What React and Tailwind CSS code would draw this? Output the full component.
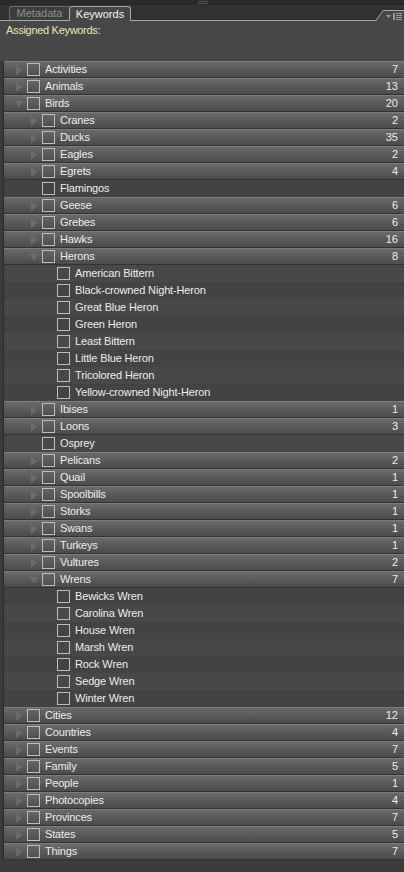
import React from "react";

const rows = [
  { l: 0, t: "Activities", c: 7, s: "r" },
  { l: 0, t: "Animals", c: 13, s: "r" },
  { l: 0, t: "Birds", c: 20, s: "d" },
  { l: 1, t: "Cranes", c: 2, s: "r" },
  { l: 1, t: "Ducks", c: 35, s: "r" },
  { l: 1, t: "Eagles", c: 2, s: "r" },
  { l: 1, t: "Egrets", c: 4, s: "r" },
  { l: 1, t: "Flamingos", s: "n" },
  { l: 1, t: "Geese", c: 6, s: "r" },
  { l: 1, t: "Grebes", c: 6, s: "r" },
  { l: 1, t: "Hawks", c: 16, s: "r" },
  { l: 1, t: "Herons", c: 8, s: "d" },
  { l: 2, t: "American Bittern", s: "n" },
  { l: 2, t: "Black-crowned Night-Heron", s: "n" },
  { l: 2, t: "Great Blue Heron", s: "n" },
  { l: 2, t: "Green Heron", s: "n" },
  { l: 2, t: "Least Bittern", s: "n" },
  { l: 2, t: "Little Blue Heron", s: "n" },
  { l: 2, t: "Tricolored Heron", s: "n" },
  { l: 2, t: "Yellow-crowned Night-Heron", s: "n" },
  { l: 1, t: "Ibises", c: 1, s: "r" },
  { l: 1, t: "Loons", c: 3, s: "r" },
  { l: 1, t: "Osprey", s: "n" },
  { l: 1, t: "Pelicans", c: 2, s: "r" },
  { l: 1, t: "Quail", c: 1, s: "r" },
  { l: 1, t: "Spoolbills", c: 1, s: "r" },
  { l: 1, t: "Storks", c: 1, s: "r" },
  { l: 1, t: "Swans", c: 1, s: "r" },
  { l: 1, t: "Turkeys", c: 1, s: "r" },
  { l: 1, t: "Vultures", c: 2, s: "r" },
  { l: 1, t: "Wrens", c: 7, s: "d" },
  { l: 2, t: "Bewicks Wren", s: "n" },
  { l: 2, t: "Carolina Wren", s: "n" },
  { l: 2, t: "House Wren", s: "n" },
  { l: 2, t: "Marsh Wren", s: "n" },
  { l: 2, t: "Rock Wren", s: "n" },
  { l: 2, t: "Sedge Wren", s: "n" },
  { l: 2, t: "Winter Wren", s: "n" },
  { l: 0, t: "Cities", c: 12, s: "r" },
  { l: 0, t: "Countries", c: 4, s: "r" },
  { l: 0, t: "Events", c: 7, s: "r" },
  { l: 0, t: "Family", c: 5, s: "r" },
  { l: 0, t: "People", c: 1, s: "r" },
  { l: 0, t: "Photocopies", c: 4, s: "r" },
  { l: 0, t: "Provinces", c: 7, s: "r" },
  { l: 0, t: "States", c: 5, s: "r" },
  { l: 0, t: "Things", c: 7, s: "r" },
];

const indents = ["w-[7px]", "w-[22px]", "w-[37px]"];

function Tri({ s }) {
  if (s === "r")
    return (
      <svg width="8" height="10" viewBox="0 0 8 10" className="block">
        <polygon points="1,0 7.5,5 1,10" fill="#6b6b6b" />
      </svg>
    );
  if (s === "d")
    return (
      <svg width="10" height="8" viewBox="0 0 10 8" className="block">
        <polygon points="0,1 10,1 5,7.5" fill="#6b6b6b" />
      </svg>
    );
  return null;
}

function Row({ r, alt }) {
  const parent = r.s !== "n";
  const bg = parent
    ? "bg-gradient-to-b from-[#6a6a6a] via-[#5a5a5a] to-[#4b4b4b] border-t border-t-[#7c7c7c] border-b border-b-[#333333]"
    : alt
    ? "bg-[#434343]"
    : "bg-[#484848]";
  return (
    <div className={`flex items-center h-[17px] pr-[6px] ${bg}`}>
      <div className={`${indents[r.l]} shrink-0`} />
      <div className="w-[16px] h-[17px] flex items-center justify-center shrink-0">
        <Tri s={r.s} />
      </div>
      <div className="w-[13px] h-[13px] border border-[#bdbdbd] shrink-0" />
      <span className="ml-[5px] text-[11px] leading-none text-[#ececec] flex-1 whitespace-nowrap tracking-[-0.15px]">{r.t}</span>
      {r.c !== undefined && <span className="text-[11px] leading-none text-[#ececec]">{r.c}</span>}
    </div>
  );
}

export default function App() {
  let leafIdx = 0;
  return (
    <div className="w-[404px] h-[872px] bg-[#3c3c3c] font-['Liberation_Sans',Arial,sans-serif] overflow-hidden relative">
      <div className="h-[5px] bg-[#2a2a2a] relative">
        <div className="absolute left-[198px] top-[1px] w-[10px] h-[1px] bg-[#555]" />
        <div className="absolute left-[198px] top-[3px] w-[10px] h-[1px] bg-[#555]" />
      </div>
      <div className="h-[16px] bg-[#313131] flex items-end pl-[9px] relative border-b border-[#a8a8a8]">
        <div className="h-[14px] w-[60px] bg-[#3d3d3d] border-t border-l border-[#6a6a6a] rounded-tl-[3px] flex items-center justify-center text-[11px] leading-none text-[#8e8e8e]">
          Metadata
        </div>
        <div className="h-[15px] w-[62px] bg-[#474747] border-t border-x border-[#a8a8a8] rounded-t-[3px] flex items-center justify-center text-[11px] leading-none text-[#f2f2f2] -mb-px">
          Keywords
        </div>
        <svg className="absolute right-0 bottom-[-1px]" width="28" height="11" viewBox="0 0 28 11">
          <polygon points="0,11 7,1 28,1 28,11" fill="#474747" />
          <polyline points="0,10.5 7,0.5 28,0.5" fill="none" stroke="#a8a8a8" strokeWidth="1" />
          <polygon points="10,5 15,5 12.5,8" fill="#9a9a9a" />
          <rect x="17" y="3" width="2" height="7" fill="#9a9a9a" />
          <rect x="20" y="3" width="6" height="1" fill="#9a9a9a" />
          <rect x="20" y="5" width="6" height="1" fill="#9a9a9a" />
          <rect x="20" y="7" width="6" height="1" fill="#9a9a9a" />
          <rect x="20" y="9" width="6" height="1" fill="#9a9a9a" />
        </svg>
      </div>
      <div className="h-[40px] bg-[#474747] pl-[6px] pt-[4px]">
        <div className="text-[11px] leading-none text-[#ece4b8] tracking-[-0.3px]">Assigned Keywords:</div>
      </div>
      <div className="flex">
        <div className="w-[4px] shrink-0 bg-[#3a3a3a] border-r border-[#2c2c2c]" />
        <div className="flex-1 flex flex-col">
          {rows.map((r, i) => {
            const alt = r.s === "n" ? leafIdx++ % 2 === 0 : false;
            return <Row key={i} r={r} alt={alt} />;
          })}
        </div>
      </div>
    </div>
  );
}
